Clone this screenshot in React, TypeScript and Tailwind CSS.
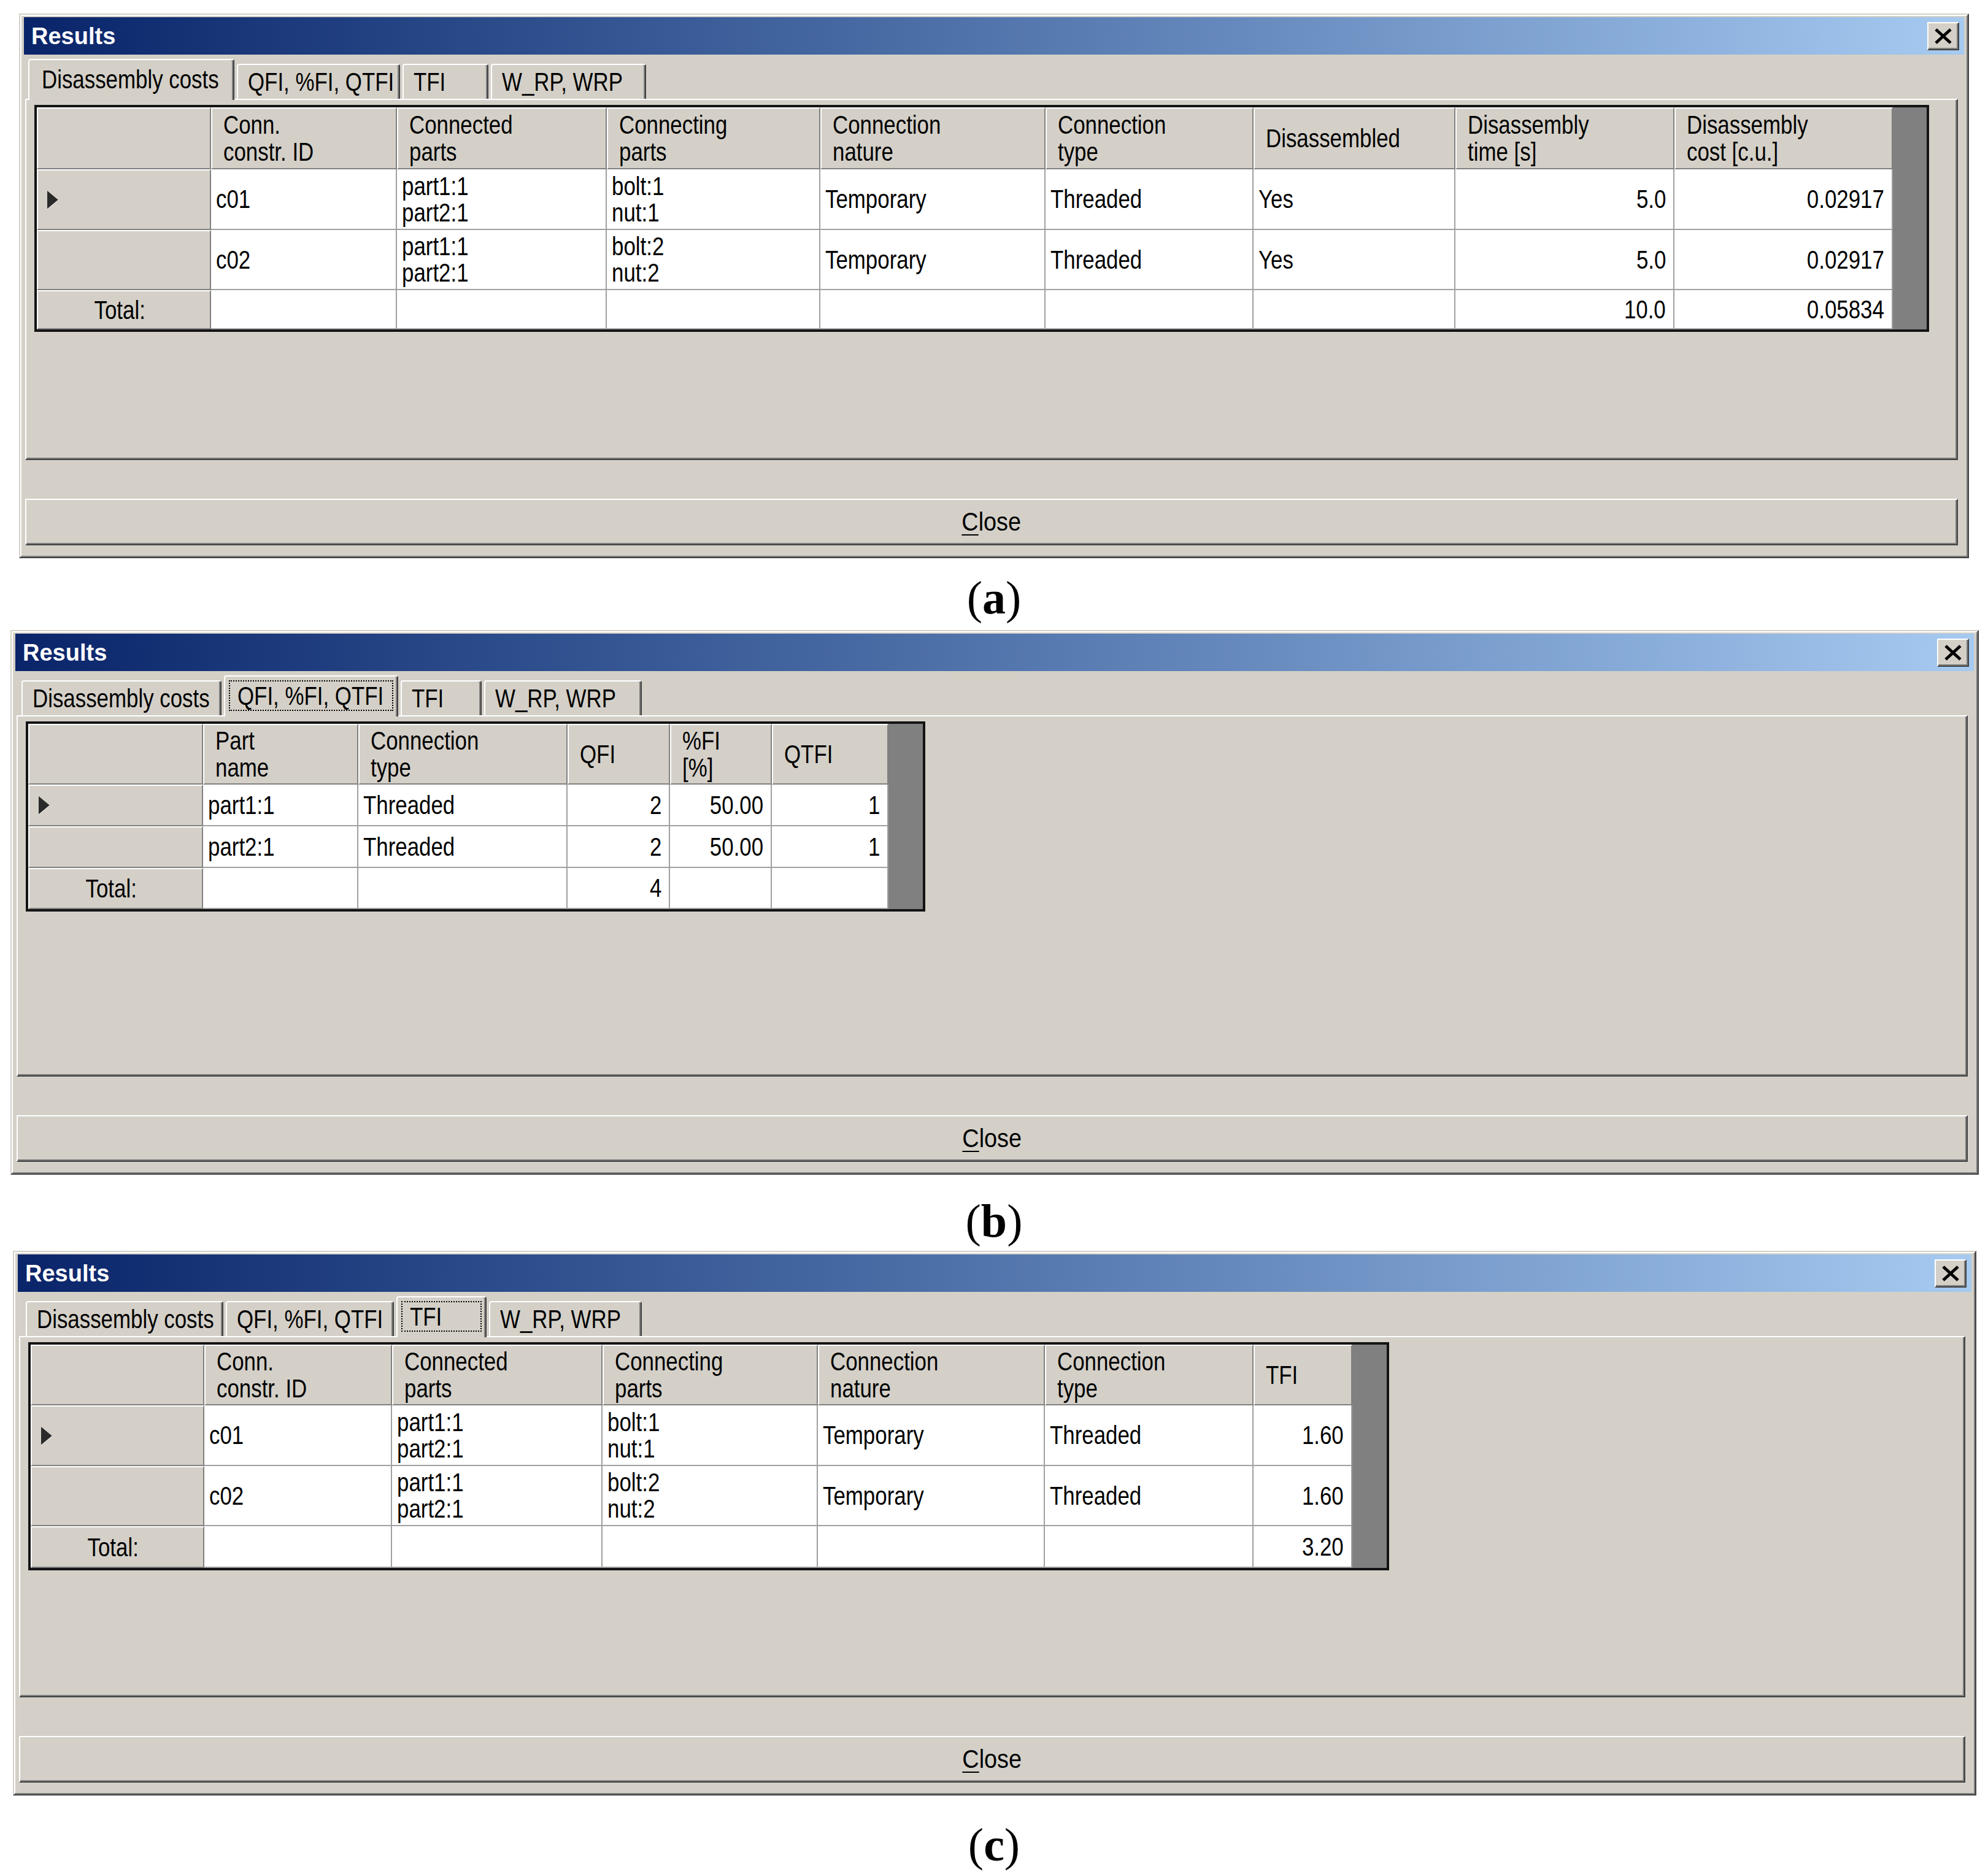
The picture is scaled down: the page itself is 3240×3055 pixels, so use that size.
import React from "react";
import clsx from "clsx";

type Cell = string | string[];
type Col = { w: string; head: string[]; right?: boolean };
type Row = { h: string; cells: Cell[]; marker?: boolean; total?: boolean };

const TABS = ["Disassembly costs", "QFI, %FI, QTFI", "TFI", "W_RP, WRP"];

// classic 3D edges
const RAISED =
  "bg-[#d4d0c8] border-2 border-t-white border-l-white border-r-[#808080] border-b-[#808080]";
const BUTTON =
  "bg-[#d4d0c8] border-2 border-t-white border-l-white border-r-[#404040] border-b-[#404040] shadow-[inset_-2px_-2px_0_#808080]";
const TAB =
  "bg-[#d4d0c8] border-t-2 border-l-2 border-r-2 border-t-white border-l-white border-r-[#404040] rounded-t-[4px] shadow-[inset_-2px_0_0_#808080]";

function Txt({ s, align = "left" }: { s: string; align?: "left" | "right" | "center" }) {
  return (
    <span
      className={clsx(
        "inline-block whitespace-nowrap scale-x-83",
        align === "right" && "origin-right",
        align === "center" && "origin-center",
        align === "left" && "origin-left"
      )}
    >
      {s}
    </span>
  );
}

function Marker() {
  return (
    <svg width="20" height="32" viewBox="0 0 20 32">
      <polygon points="1,1 19,16 1,31" fill="#2a2a2a" />
      <line x1="1" y1="31" x2="19" y2="16" stroke="#ffffff" strokeWidth="1" />
    </svg>
  );
}

function Grid({ cols, rows, w, headH }: { cols: Col[]; rows: Row[]; w: string; headH: string }) {
  return (
    <div className={clsx("flex border-4 border-[#141414]", w)}>
      <div className="flex flex-col">
        <div className={clsx("flex", headH)}>
          <div className={clsx(RAISED, cols[0].w)} />
          {cols.slice(1).map((c) => (
            <div
              key={c.head.join()}
              className={clsx(RAISED, c.w, "flex flex-col justify-center pl-[18px] leading-[44px]")}
            >
              {c.head.map((l) => (
                <div key={l}>
                  <Txt s={l} />
                </div>
              ))}
            </div>
          ))}
        </div>
        {rows.map((r, ri) => (
          <div key={ri} className={clsx("flex", r.h)}>
            <div
              className={clsx(
                RAISED,
                cols[0].w,
                "flex items-center",
                r.total ? "justify-center pr-[14px]" : "pl-[14px]"
              )}
            >
              {r.marker && <Marker />}
              {r.total && <Txt s="Total:" align="center" />}
            </div>
            {cols.slice(1).map((c, ci) => {
              const v = r.cells[ci];
              const lines = v === undefined || v === "" ? [] : Array.isArray(v) ? v : [v];
              return (
                <div
                  key={ci}
                  className={clsx(
                    "bg-white border-r-2 border-b-2 border-[#a0a0a0] flex flex-col justify-center leading-[43px]",
                    c.w,
                    c.right ? "items-end pr-[12px]" : "items-start pl-[8px]"
                  )}
                >
                  {lines.map((l) => (
                    <div key={l}>
                      <Txt s={l} align={c.right ? "right" : "left"} />
                    </div>
                  ))}
                </div>
              );
            })}
          </div>
        ))}
      </div>
      <div className="flex-1 bg-[#808080]" />
    </div>
  );
}

type DialogProps = {
  box: string;
  active: number;
  focus: boolean;
  tabW: string[];
  stripPl: string;
  gridW: string;
  headH: string;
  cols: Col[];
  rows: Row[];
};

function Dialog({ box, active, focus, tabW, stripPl, gridW, headH, cols, rows }: DialogProps) {
  return (
    <div
      className={clsx(
        "h-[888px] border-2 border-t-[#d4d0c8] border-l-[#d4d0c8] border-r-[#404040] border-b-[#404040] bg-[#d4d0c8]",
        box
      )}
    >
      <div className="h-full border-2 border-t-white border-l-white border-r-[#808080] border-b-[#808080]">
        <div className="px-[4px] pt-[2px]">
          <div className="h-[61px] flex items-center justify-between pl-[12px] pr-[8px] bg-linear-to-r from-[#0a246a] to-[#a6caf0]">
            <span className="text-white font-bold text-[38px] leading-none">Results</span>
            <div className={clsx(BUTTON, "w-[52px] h-[46px] flex items-center justify-center")}>
              <svg width="30" height="26" viewBox="0 0 30 26">
                <path d="M3 2 L27 24 M27 2 L3 24" stroke="#000" strokeWidth="5" />
              </svg>
            </div>
          </div>
        </div>

        <div className="pl-[6px] pr-[14px]">
          <div className={clsx("flex items-end gap-[4px] h-[72px]", stripPl)}>
            {TABS.map((t, i) =>
              i === active ? (
                <div key={t} className={clsx(TAB, tabW[i], "relative z-10 -mb-[2px] h-[67px] p-[6px] pb-[9px]")}>
                  <div
                    className={clsx(
                      "h-full flex items-center pl-[12px] border-2 border-dotted",
                      focus ? "border-black" : "border-transparent"
                    )}
                  >
                    <Txt s={t} />
                  </div>
                </div>
              ) : (
                <div key={t} className={clsx(TAB, tabW[i], "h-[57px] flex items-center pl-[16px]")}>
                  <Txt s={t} />
                </div>
              )
            )}
          </div>

          <div className="h-[589px] border-2 border-t-white border-l-white border-r-[#404040] border-b-[#404040] shadow-[inset_-2px_-2px_0_#808080] pl-[13px] pt-[8px]">
            <Grid cols={cols} rows={rows} w={gridW} headH={headH} />
          </div>

          <div className={clsx(BUTTON, "mt-[63px] h-[76px] flex items-center justify-center leading-none")}>
            <span className="inline-block scale-x-90">
              <span className="underline decoration-2 underline-offset-[6px]">C</span>lose
            </span>
          </div>
        </div>
      </div>
    </div>
  );
}

function Label({ ch, box }: { ch: string; box: string }) {
  return (
    <div
      className={clsx(
        "flex items-center justify-center font-['Liberation_Serif','Times_New_Roman',serif] text-[76px] leading-none text-black",
        box
      )}
    >
      <span>
        (<b>{ch}</b>)
      </span>
    </div>
  );
}

const costCols: Col[] = [
  { w: "w-[284px]", head: [] },
  { w: "w-[303px]", head: ["Conn.", "constr. ID"] },
  { w: "w-[342px]", head: ["Connected", "parts"] },
  { w: "w-[348px]", head: ["Connecting", "parts"] },
  { w: "w-[367px]", head: ["Connection", "nature"] },
  { w: "w-[339px]", head: ["Connection", "type"] },
  { w: "w-[329px]", head: ["Disassembled"] },
  { w: "w-[357px]", head: ["Disassembly", "time [s]"], right: true },
  { w: "w-[356px]", head: ["Disassembly", "cost [c.u.]"], right: true },
];

const costRows: Row[] = [
  {
    h: "h-[99px]",
    marker: true,
    cells: ["c01", ["part1:1", "part2:1"], ["bolt:1", "nut:1"], "Temporary", "Threaded", "Yes", "5.0", "0.02917"],
  },
  {
    h: "h-[98px]",
    cells: ["c02", ["part1:1", "part2:1"], ["bolt:2", "nut:2"], "Temporary", "Threaded", "Yes", "5.0", "0.02917"],
  },
  { h: "h-[64px]", total: true, cells: ["", "", "", "", "", "", "10.0", "0.05834"] },
];

const qfiCols: Col[] = [
  { w: "w-[285px]", head: [] },
  { w: "w-[253px]", head: ["Part", "name"] },
  { w: "w-[341px]", head: ["Connection", "type"] },
  { w: "w-[167px]", head: ["QFI"], right: true },
  { w: "w-[166px]", head: ["%FI", "[%]"], right: true },
  { w: "w-[190px]", head: ["QTFI"], right: true },
];

const qfiRows: Row[] = [
  { h: "h-[68px]", marker: true, cells: ["part1:1", "Threaded", "2", "50.00", "1"] },
  { h: "h-[68px]", cells: ["part2:1", "Threaded", "2", "50.00", "1"] },
  { h: "h-[67px]", total: true, cells: ["", "", "4", "", ""] },
];

const tfiCols: Col[] = [
  { w: "w-[283px]", head: [] },
  { w: "w-[306px]", head: ["Conn.", "constr. ID"] },
  { w: "w-[343px]", head: ["Connected", "parts"] },
  { w: "w-[351px]", head: ["Connecting", "parts"] },
  { w: "w-[370px]", head: ["Connection", "nature"] },
  { w: "w-[340px]", head: ["Connection", "type"] },
  { w: "w-[161px]", head: ["TFI"], right: true },
];

const tfiRows: Row[] = [
  {
    h: "h-[99px]",
    marker: true,
    cells: ["c01", ["part1:1", "part2:1"], ["bolt:1", "nut:1"], "Temporary", "Threaded", "1.60"],
  },
  {
    h: "h-[98px]",
    cells: ["c02", ["part1:1", "part2:1"], ["bolt:2", "nut:2"], "Temporary", "Threaded", "1.60"],
  },
  { h: "h-[68px]", total: true, cells: ["", "", "", "", "", "3.20"] },
];

export default function App() {
  return (
    <div className="w-[3240px] min-h-[3055px] bg-white pt-[22px] font-['Liberation_Sans',Arial,sans-serif] text-[42px] text-black">
      <Dialog
        box="ml-[31px] w-[3178px]"
        active={0}
        focus={false}
        tabW={["w-[336px]", "w-[266px]", "w-[140px]", "w-[253px]"]}
        stripPl="pl-[5px]"
        gridW="w-[3088px]"
        headH="h-[101px]"
        cols={costCols}
        rows={costRows}
      />
      <Label ch="a" box="h-[117px] pt-[10px]" />
      <Dialog
        box="ml-[17px] w-[3208px]"
        active={1}
        focus={true}
        tabW={["w-[326px]", "w-[284px]", "w-[132px]", "w-[257px]"]}
        stripPl="pl-[8px]"
        gridW="w-[1466px]"
        headH="h-[99px]"
        cols={qfiCols}
        rows={qfiRows}
      />
      <Label ch="b" box="h-[124px] pt-[26px]" />
      <Dialog
        box="ml-[21px] w-[3200px]"
        active={2}
        focus={true}
        tabW={["w-[322px]", "w-[274px]", "w-[147px]", "w-[249px]"]}
        stripPl="pl-[11px]"
        gridW="w-[2218px]"
        headH="h-[99px]"
        cols={tfiCols}
        rows={tfiRows}
      />
      <Label ch="c" box="h-[125px] pt-[34px]" />
    </div>
  );
}
